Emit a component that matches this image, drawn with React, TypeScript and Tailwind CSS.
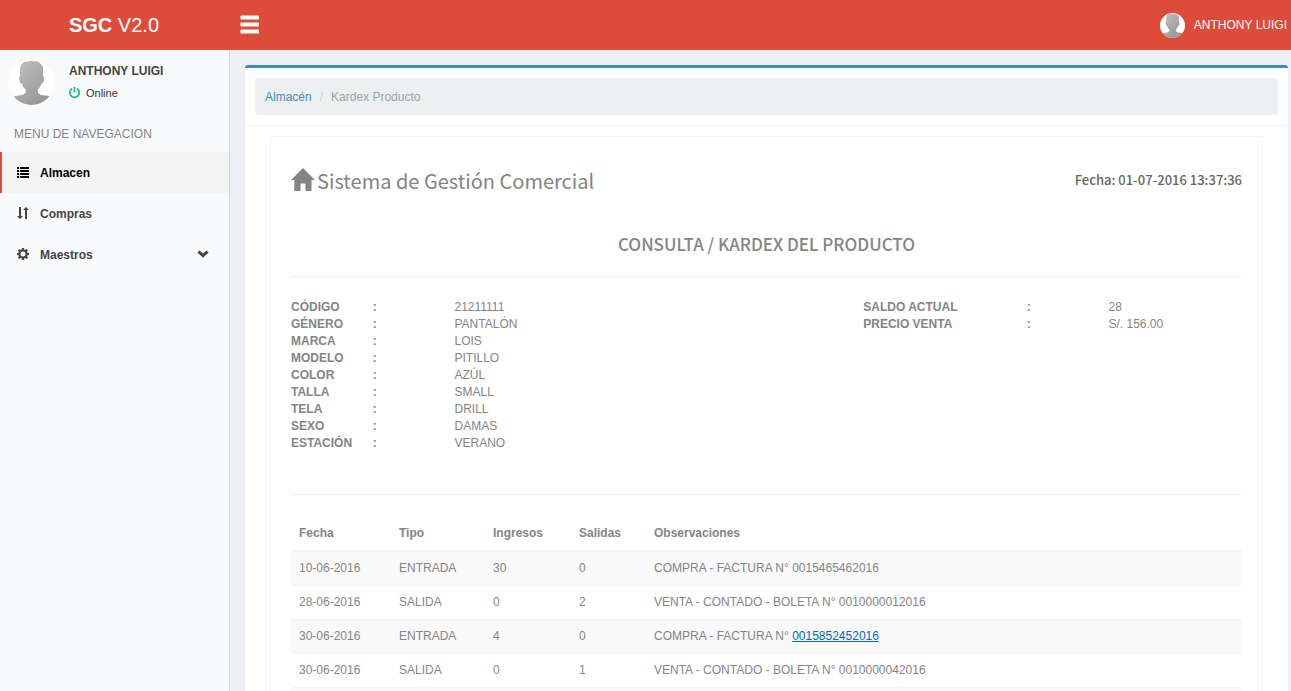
import React, { useId } from "react";

type Detail = { label: string; value: string };
type Movement = {
  date: string;
  kind: string;
  incoming: number;
  outgoing: number;
  note: string;
  linkedDocument?: string;
};

const productDetails: Detail[] = [
  { label: "CÓDIGO", value: "21211111" },
  { label: "GÉNERO", value: "PANTALÓN" },
  { label: "MARCA", value: "LOIS" },
  { label: "MODELO", value: "PITILLO" },
  { label: "COLOR", value: "AZÚL" },
  { label: "TALLA", value: "SMALL" },
  { label: "TELA", value: "DRILL" },
  { label: "SEXO", value: "DAMAS" },
  { label: "ESTACIÓN", value: "VERANO" },
];

const stockDetails: Detail[] = [
  { label: "SALDO ACTUAL", value: "28" },
  { label: "PRECIO VENTA", value: "S/. 156.00" },
];

const movements: Movement[] = [
  { date: "10-06-2016", kind: "ENTRADA", incoming: 30, outgoing: 0, note: "COMPRA - FACTURA N° 0015465462016" },
  { date: "28-06-2016", kind: "SALIDA", incoming: 0, outgoing: 2, note: "VENTA - CONTADO - BOLETA N° 0010000012016" },
  { date: "30-06-2016", kind: "ENTRADA", incoming: 4, outgoing: 0, note: "COMPRA - FACTURA N° ", linkedDocument: "0015852452016" },
  { date: "30-06-2016", kind: "SALIDA", incoming: 0, outgoing: 1, note: "VENTA - CONTADO - BOLETA N° 0010000042016" },
];

function Avatar({ className }: { className: string }) {
  const id = useId();
  return (
    <svg viewBox="0 0 45 45" className={className} role="img" aria-label="Anthony Luigi">
      <defs>
        <linearGradient id={id + "g"} x1="0" y1="0" x2="1" y2="1">
          <stop offset="0" stopColor="#c4c4c4" />
          <stop offset="1" stopColor="#8e8e8e" />
        </linearGradient>
        <clipPath id={id + "c"}>
          <circle cx="22.5" cy="22.5" r="22.5" />
        </clipPath>
      </defs>
      <circle cx="22.5" cy="22.5" r="22.5" fill="#fff" />
      <path
        clipPath={`url(#${id}c)`}
        fill={`url(#${id}g)`}
        d="M11 8.500 L12.500 4.500 L15 2 L19 1.500 L21 .800 L25 1.200 L28.500 1.500 L32 4 L34 7 V16.500 L35.200 17.500 L34.500 22 L32.500 24 L31 27 L29 29.500 V33 L32 35 L40 36 L45 39 V45 H0 V39 L5 36.200 L13 35 L16.500 33 V29.500 L14 26.500 L13 24 L11 22.500 L9.800 17.500 L11 16.500 Z"
      />
    </svg>
  );
}

function ListIcon() {
  return (
    <svg viewBox="0 0 12 12" className="size-3" fill="currentColor" aria-hidden="true">
      <path d="M0 1h2v2H0zM3 1h9v2H3zM0 4h2v2H0zM3 4h9v2H3zM0 7h2v2H0zM3 7h9v2H3zM0 10h2v2H0zM3 10h9v2H3z" />
    </svg>
  );
}

function SortIcon() {
  return (
    <svg viewBox="0 0 12 12" className="size-3" fill="currentColor" aria-hidden="true">
      <path d="M2 0h2v9h2L3 12 0 9h2zM8 12h2V3h2L9 0 6 3h2z" />
    </svg>
  );
}

function GearIcon() {
  return (
    <svg viewBox="0 0 12 12" className="size-3" fill="currentColor" aria-hidden="true">
      <path
        fillRule="evenodd"
        d="M5 0h2l.35 1.700.9.400L9.700 1.100l1.300 1.300-1 1.400.4.900L12 5v2l-1.600.35-.4.900 1 1.400-1.300 1.300-1.450-1-.9.400L7 12H5l-.35-1.650-.9-.4-1.450 1L1 9.650l1-1.400-.4-.9L0 7V5l1.600-.3.400-.9-1-1.400L2.300 1.100l1.450 1 .9-.4zM6 3.500a2.500 2.500 0 1 0 0 5 2.500 2.500 0 0 0 0-5z"
      />
    </svg>
  );
}

function ChevronIcon() {
  return (
    <svg viewBox="0 0 12 12" className="size-3" fill="currentColor" aria-hidden="true">
      <path d="M6 9.800.400 4.400 2.600 2.400 6 5.600 9.400 2.400l2.200 2z" />
    </svg>
  );
}

function PowerIcon() {
  return (
    <svg viewBox="0 0 12 12" className="mb-px size-3 text-[#18bc9c]" fill="none" stroke="currentColor" strokeWidth="1.700" aria-hidden="true">
      <path d="M5.500 0v5.500M3.200 1.500a4.700 4.700 0 1 0 4.600 0" />
    </svg>
  );
}

function HomeIcon() {
  return (
    <svg viewBox="0 0 24 23" className="mb-1 h-[23px] w-6 shrink-0" fill="currentColor" aria-hidden="true">
      <path d="M12 0 24 12h-3.500v11h-6v-7.500h-5V23H3.300V12H0z" />
    </svg>
  );
}

function MenuIcon() {
  return (
    <svg viewBox="0 0 20 20" className="size-5" fill="currentColor" aria-hidden="true">
      <rect x="0.500" y="0.500" width="18.500" height="4" rx="0.800" />
      <rect x="0.500" y="7.500" width="18.500" height="4" rx="0.800" />
      <rect x="0.500" y="14.500" width="18.500" height="4" rx="0.800" />
    </svg>
  );
}

function NavItem({ icon, label, active, expandable }: { icon: React.ReactNode; label: string; active?: boolean; expandable?: boolean }) {
  return (
    <li>
      <a
        href="#"
        aria-current={active ? "page" : undefined}
        className={
          "flex h-[41px] items-center border-l-2 pr-5 pb-px pl-[15px] font-bold " +
          (active ? "border-[#dd4b39] bg-[#f4f4f4] text-black" : "border-transparent text-[#444]")
        }
      >
        {icon}
        <span className="ml-[11px] flex-1 pt-[2px]">{label}</span>
        {expandable && <ChevronIcon />}
      </a>
    </li>
  );
}

function DetailList({ rows, className, labelSpan }: { rows: Detail[]; className: string; labelSpan: string }) {
  return (
    <dl className={className}>
      {rows.map((row) => (
        <div key={row.label} className="col-span-full grid grid-cols-subgrid whitespace-nowrap">
          <dt className={"pl-[15px] font-bold " + labelSpan}>{row.label}</dt>
          <span className="pl-[15px] font-bold">:</span>
          <dd className="col-span-2 pl-[15px]">{row.value}</dd>
        </div>
      ))}
    </dl>
  );
}

export default function App() {
  return (
    <div className="flex h-screen flex-col overflow-hidden bg-[#ecf0f5] font-['Liberation_Sans',Arial,sans-serif] text-[12px] leading-[17px] text-[#333]">
      <header className="flex h-[50px] shrink-0 items-center bg-[#dd4b39] text-white">
        <a href="#" className="w-[228px] text-center text-[20px] leading-[50px]">
          <b>SGC</b> V2.0
        </a>
        <button type="button" aria-label="Menú" className="ml-3">
          <MenuIcon />
        </button>
        <a href="#" className="ml-auto flex items-center gap-[9px] pr-1">
          <Avatar className="size-[25px]" />
          <span>ANTHONY LUIGI</span>
        </a>
      </header>

      <div className="flex min-h-0 flex-1">
        <aside className="w-[230px] shrink-0 border-r border-[#d2d6de] bg-[#f9fafc]">
          <div className="flex gap-[15px] px-[9px] pt-[10px]">
            <Avatar className="size-[45px]" />
            <div className="pt-[3px] text-[#444]">
              <p className="font-bold">ANTHONY LUIGI</p>
              <a href="#" className="mt-[5px] flex items-center gap-[5px] text-[11px] text-[#333]">
                <PowerIcon />
                Online
              </a>
            </div>
          </div>
          <nav aria-label="Menú de navegación">
            <h2 className="mt-[21px] mb-[9px] px-[14px] text-[#848484]">MENU DE NAVEGACION</h2>
            <ul>
              <NavItem icon={<ListIcon />} label="Almacen" active />
              <NavItem icon={<SortIcon />} label="Compras" />
              <NavItem icon={<GearIcon />} label="Maestros" expandable />
            </ul>
          </nav>
        </aside>

        <main className="min-w-0 flex-1 overflow-hidden pt-[15px] pr-[3px] pl-[15px]">
          <section className="min-h-full rounded-[3px] border-t-[3px] border-[#3c8dbc] bg-white shadow-[0_1px_1px_rgba(0,0,0,0.1)]">
            <div className="border-b border-[#f4f4f4] p-[10px]">
              <nav aria-label="Ruta" className="rounded bg-[#ecf0f1] px-[10px] pt-[11px] pb-[9px]">
                <ol className="flex">
                  <li>
                    <a href="#" className="text-[#3c8dbc]">Almacén</a>
                  </li>
                  <li aria-hidden="true" className="px-2 text-[#ccc]">/</li>
                  <li aria-current="page" className="text-[#95a5a6]">Kardex Producto</li>
                </ol>
              </nav>
            </div>

            <article className="mx-[25px] mt-[10px] border border-[#f4f4f4] p-5 text-[#848484]">
              <div className="flex items-center justify-between pt-2 font-['Noto_Sans_CJK_SC','Open_Sans',sans-serif]">
                <h1 className="flex items-center gap-[2px] text-[20px] leading-[32px]">
                  <HomeIcon />
                  Sistema de Gestión Comercial
                </h1>
                <p className="pb-1 text-[13px] font-medium text-[#666]">Fecha: 01-07-2016 13:37:36</p>
              </div>

              <h2 className="mt-[35px] text-center font-['Noto_Sans_CJK_SC','Open_Sans',sans-serif] text-[17px] leading-[24px] font-medium">
                CONSULTA / KARDEX DEL PRODUCTO
              </h2>
              <hr className="mt-[20px] border-[#eee]" />

              <div className="-mx-[15px] mt-[22px] grid grid-cols-12">
                <DetailList rows={productDetails} labelSpan="col-span-1" className="col-span-7 grid grid-cols-subgrid content-start" />
                <DetailList rows={stockDetails} labelSpan="col-span-2" className="col-span-5 grid grid-cols-subgrid content-start" />
              </div>
              <hr className="mt-[42px] border-[#eee]" />

              <table className="mt-[22px] w-full table-fixed border-collapse text-left">
                <colgroup>
                  <col className="w-[100px]" />
                  <col className="w-[94px]" />
                  <col className="w-[86px]" />
                  <col className="w-[75px]" />
                  <col />
                </colgroup>
                <thead>
                  <tr className="border-b-2 border-[#f4f4f4]">
                    {["Fecha", "Tipo", "Ingresos", "Salidas", "Observaciones"].map((heading) => (
                      <th key={heading} scope="col" className="p-2 font-bold">{heading}</th>
                    ))}
                  </tr>
                </thead>
                <tbody>
                  {movements.map((m, i) => (
                    <tr key={i} className="border-b border-[#f4f4f4] odd:bg-[#f9f9f9]">
                      <td className="p-2">{m.date}</td>
                      <td className="p-2">{m.kind}</td>
                      <td className="p-2">{m.incoming}</td>
                      <td className="p-2">{m.outgoing}</td>
                      <td className="p-2">
                        {m.note}
                        {m.linkedDocument && (
                          <a href="#" className="text-[#0066cc] underline">{m.linkedDocument}</a>
                        )}
                      </td>
                    </tr>
                  ))}
                  <tr className="bg-[#f9f9f9]" aria-hidden="true">
                    <td colSpan={5} className="h-[33px]" />
                  </tr>
                </tbody>
              </table>
            </article>
          </section>
        </main>
      </div>
    </div>
  );
}
